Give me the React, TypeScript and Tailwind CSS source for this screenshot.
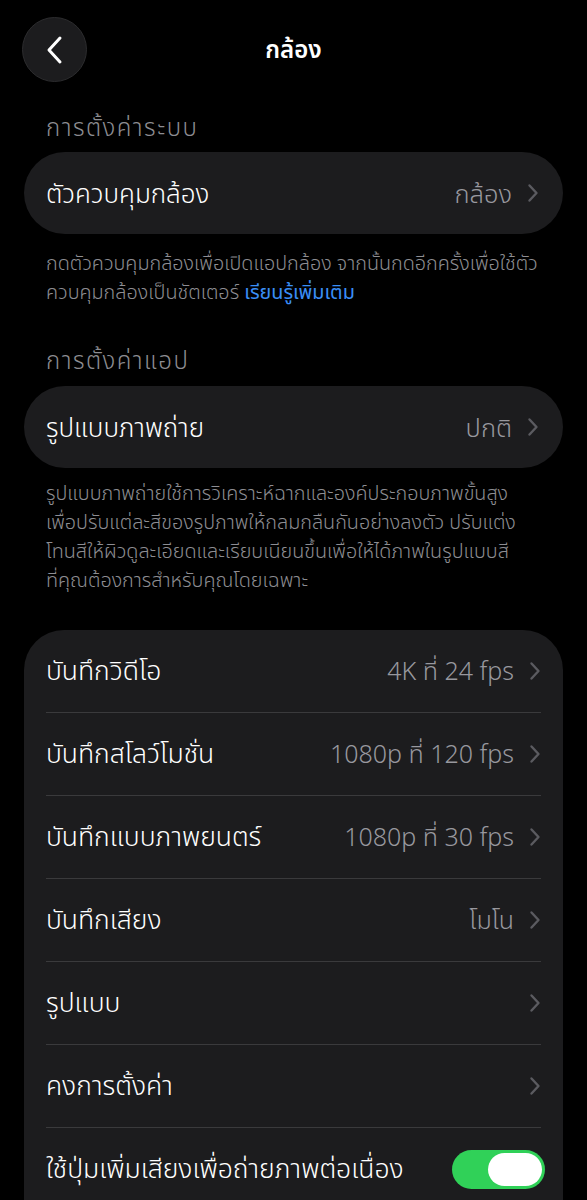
import React from 'react'

const Chevron = () => (
    <svg width="12" height="20" viewBox="0 0 12 20" fill="none" className="shrink-0">
        <path d="M2.5 2.5 9.5 10 2.5 17.5" stroke="#5b5b60" strokeWidth="2.4" strokeLinecap="round" strokeLinejoin="round" />
    </svg>
)

type Row = { label: string; value?: string; toggle?: boolean }

const videoRows: Row[] = [
    { label: 'บันทึกวิดีโอ', value: '4K ที่ 24 fps' },
    { label: 'บันทึกสโลว์โมชั่น', value: '1080p ที่ 120 fps' },
    { label: 'บันทึกแบบภาพยนตร์', value: '1080p ที่ 30 fps' },
    { label: 'บันทึกเสียง', value: 'โมโน' },
    { label: 'รูปแบบ' },
    { label: 'คงการตั้งค่า' },
    { label: 'ใช้ปุ่มเพิ่มเสียงเพื่อถ่ายภาพต่อเนื่อง', toggle: true },
]

const SettingRow = ({ label, value, toggle }: Row) => (
    <div className="flex items-center justify-between h-[82px] box-content">
        <span className="text-white text-[26.5px] font-[350] whitespace-nowrap">{label}</span>
        {toggle ? (
            <div className="w-[93px] h-[39px] rounded-full bg-[#30d158] flex items-center justify-end pr-[3px] -mr-[4px]">
                <div className="w-[54px] h-[33px] rounded-full bg-white" />
            </div>
        ) : (
            <div className="flex items-center gap-[15px]">
                {value && <span className="text-[#98989e] text-[25px] font-[350]">{value}</span>}
                <Chevron />
            </div>
        )}
    </div>
)

const Footer = ({ lines, link }: { lines: string[]; link?: string }) => (
    <div className="text-[#8d8d92] text-[19.8px] font-[350] leading-[29px] px-[22px]">
        {lines.map((line, i) => (
            <div key={i} className="whitespace-nowrap">
                {line}
                {link && i === lines.length - 1 && <span className="text-[#3a8ef6] font-normal"> {link}</span>}
            </div>
        ))}
    </div>
)

export default function App() {
    return (
        <div className="min-h-[1200px] bg-black overflow-hidden" style={{ fontFamily: '"Noto Sans", "Noto Sans Thai", "DejaVu Sans", sans-serif' }}>
            {/* Nav bar */}
            <div className="relative flex items-center justify-center h-[98px]">
                <button className="absolute left-[22px] top-[17px] w-[65px] h-[65px] rounded-full bg-[#1c1c1e] border border-[#2c2c2e] flex items-center justify-center">
                    <svg width="20" height="30" viewBox="0 0 20 30" fill="none">
                        <path d="M15 3 4 15l11 12" stroke="white" strokeWidth="3" strokeLinecap="round" strokeLinejoin="round" />
                    </svg>
                </button>
                <h1 className="text-white text-[24px] font-semibold">กล้อง</h1>
            </div>

            <div className="px-[24px]">
                <p className="text-[#8d8d92] text-[24px] font-[350] tracking-[1.5px] leading-[30px] px-[22px] mt-[14px] mb-[10px]">การตั้งค่าระบบ</p>
                <div className="h-[82px] rounded-[41px] bg-[#1c1c1e] flex items-center justify-between pl-[22px] pr-[24px]">
                    <span className="text-white text-[26px] font-[350]">ตัวควบคุมกล้อง</span>
                    <div className="flex items-center gap-[15px]">
                        <span className="text-[#98989e] text-[25.5px] font-[350]">กล้อง</span>
                        <Chevron />
                    </div>
                </div>
                <div className="mt-[14px]">
                    <Footer
                        lines={['กดตัวควบคุมกล้องเพื่อเปิดแอปกล้อง จากนั้นกดอีกครั้งเพื่อใช้ตัว', 'ควบคุมกล้องเป็นชัตเตอร์']}
                        link="เรียนรู้เพิ่มเติม"
                    />
                </div>

                <p className="text-[#8d8d92] text-[24px] font-[350] tracking-[1.5px] leading-[30px] px-[22px] mt-[39px] mb-[11px]">การตั้งค่าแอป</p>
                <div className="h-[82px] rounded-[41px] bg-[#1c1c1e] flex items-center justify-between pl-[22px] pr-[24px]">
                    <span className="text-white text-[26px] font-[350]">รูปแบบภาพถ่าย</span>
                    <div className="flex items-center gap-[15px]">
                        <span className="text-[#98989e] text-[25.5px] font-[350]">ปกติ</span>
                        <Chevron />
                    </div>
                </div>
                <div className="mt-[10px]">
                    <Footer
                        lines={[
                            'รูปแบบภาพถ่ายใช้การวิเคราะห์ฉากและองค์ประกอบภาพขั้นสูง',
                            'เพื่อปรับแต่ละสีของรูปภาพให้กลมกลืนกันอย่างลงตัว ปรับแต่ง',
                            'โทนสีให้ผิวดูละเอียดและเรียบเนียนขึ้นเพื่อให้ได้ภาพในรูปแบบสี',
                            'ที่คุณต้องการสำหรับคุณโดยเฉพาะ',
                        ]}
                    />
                </div>

                <div className="mt-[36px] rounded-t-[40px] bg-[#1c1c1e] px-[22px] divide-y divide-[#3a3a3c]">
                    {videoRows.map(row => (
                        <SettingRow key={row.label} {...row} />
                    ))}
                </div>
            </div>
        </div>
    )
}
